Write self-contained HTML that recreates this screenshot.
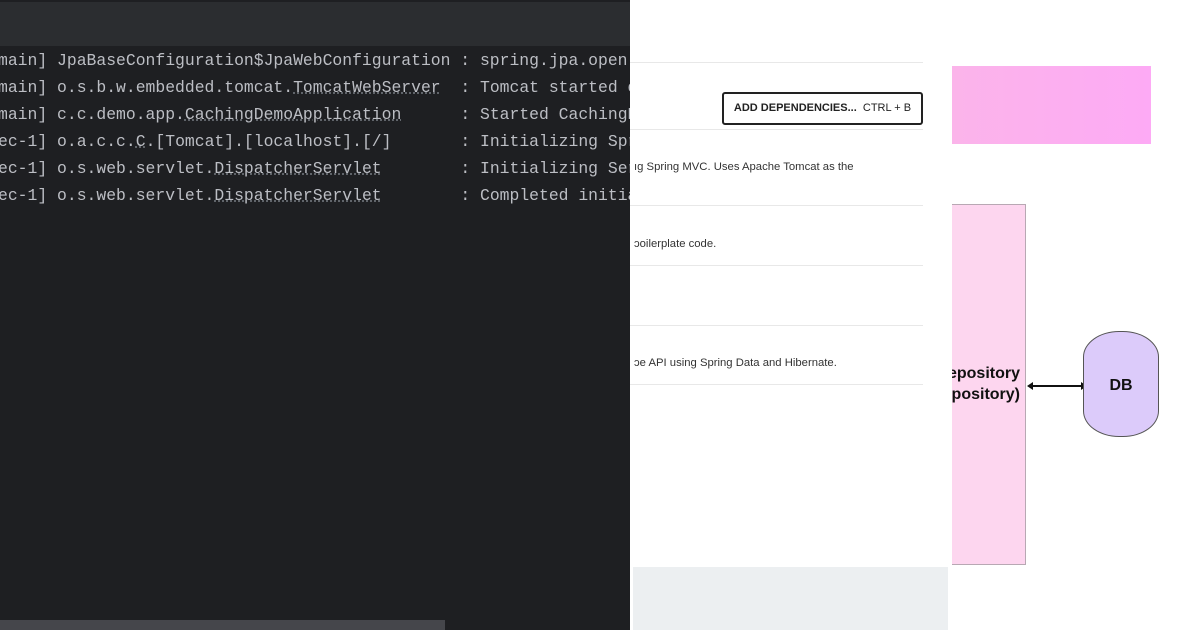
<!DOCTYPE html>
<html><head><meta charset="utf-8"><style>
body{margin:0;width:1200px;height:630px;position:relative;overflow:hidden;background:#fff;font-family:"Liberation Sans",sans-serif}
.dark{position:absolute;left:0;top:0;width:630px;height:630px;background:#1e1f22;overflow:hidden}
.top{position:absolute;left:0;top:0;width:630px;height:44px;background:#2b2d30;border-top:2px solid #1e1f22}
.code{position:absolute;left:-2px;top:47px;font-family:"Liberation Mono",monospace;font-size:16.4px;line-height:27px;color:#bcbec4;white-space:pre}
.u{text-decoration:underline dotted #6f737a}
.sb{position:absolute;left:0;top:620px;width:445px;height:10px;background:#45464b}
.hl{position:absolute;left:630px;width:293px;height:1px;background:#e8e8e8}
.t{position:absolute;left:634px;font-size:11.3px;color:#333}
</style></head><body>
<div class="dark"><div class="top"></div>
<div class="code">main] JpaBaseConfiguration$JpaWebConfiguration : spring.jpa.open
main] o.s.b.w.embedded.tomcat.<span class="u">TomcatWebServer</span>  : Tomcat started o
main] c.c.demo.app.<span class="u">CachingDemoApplication</span>      : Started CachingD
ec-1] o.a.c.c.<span class="u">C</span>.[Tomcat].[localhost].[/]       : Initializing Spr
ec-1] o.s.web.servlet.<span class="u">DispatcherServlet</span>        : Initializing Ser
ec-1] o.s.web.servlet.<span class="u">DispatcherServlet</span>        : Completed initia</div>
<div class="sb"></div></div>
<div class="hl" style="top:62px"></div>
<div class="hl" style="top:129px"></div>
<div class="hl" style="top:205px"></div>
<div class="hl" style="top:265px"></div>
<div class="hl" style="top:325px"></div>
<div class="hl" style="top:384px"></div>
<div style="position:absolute;left:722px;top:92px;width:197px;height:29px;border:2px solid #222;border-radius:3px;font-size:11px;line-height:29px;text-align:center;color:#222"><b>ADD DEPENDENCIES...</b>&nbsp; CTRL + B</div>
<div class="t" style="top:161px">ıg Spring MVC. Uses Apache Tomcat as the</div>
<div class="t" style="top:238px">ɔoilerplate code.</div>
<div class="t" style="top:357px">ɔe API using Spring Data and Hibernate.</div>
<div style="position:absolute;left:633px;top:567px;width:315px;height:63px;background:#eceff1"></div>
<div style="position:absolute;left:952px;top:66px;width:199px;height:78px;background:linear-gradient(90deg,#fbb4ea,#fdaaf5)"></div>
<div style="position:absolute;left:952px;top:204px;width:73px;height:359px;background:#fdd6ef;border:1px solid #b8a8b3;border-left:none;overflow:hidden">
<div style="position:absolute;right:5px;top:158px;font-weight:bold;font-size:16px;line-height:21px;text-align:right;color:#111;white-space:nowrap">Repository<br>(Repository)</div></div>
<svg style="position:absolute;left:1026px;top:379px" width="62" height="14"><line x1="4" y1="7" x2="58" y2="7" stroke="#111" stroke-width="2"/><path d="M1 7l6-4v8z M61 7l-6-4v8z" fill="#111"/></svg>
<div style="position:absolute;left:1083px;top:331px;width:74px;height:104px;background:#dccbfa;border:1px solid #555;border-radius:36px/26px"></div>
<div style="position:absolute;left:1083px;top:377px;width:76px;text-align:center;font-weight:bold;font-size:16px;color:#111">DB</div>
</body></html>
